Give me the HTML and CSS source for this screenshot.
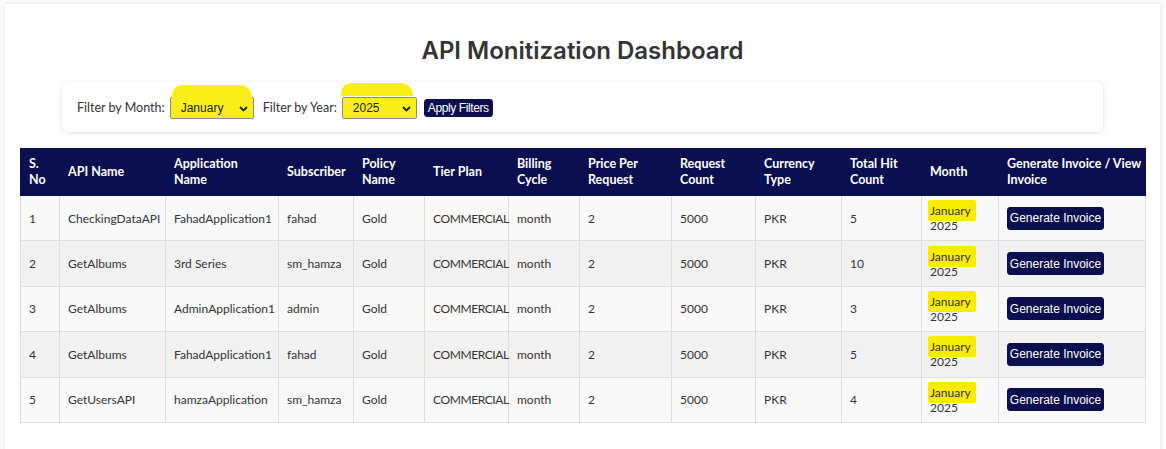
FILE: index.html
```html
<!DOCTYPE html>
<html lang="en">
<head>
<meta charset="utf-8">
<title>API Monitization Dashboard</title>
<link rel="stylesheet" href="styles.css">
</head>
<body>
<div class="card">
  <h1 class="title">API Monitization Dashboard</h1>
  <div class="filters">
    <label class="flabel" for="m">Filter by Month:</label>
    <span class="sel-wrap sel-month">
      <select id="m" class="sel"><option>January</option></select>
      <svg class="chev" width="9" height="6" viewBox="0 0 9 6"><path d="M1 1l3.5 3.5L8 1" fill="none" stroke="#222" stroke-width="1.8"/></svg>
    </span>
    <label class="flabel" for="y">Filter by Year:</label>
    <span class="sel-wrap sel-year">
      <select id="y" class="sel"><option>2025</option></select>
      <svg class="chev" width="9" height="6" viewBox="0 0 9 6"><path d="M1 1l3.5 3.5L8 1" fill="none" stroke="#222" stroke-width="1.8"/></svg>
    </span>
    <button class="btn apply">Apply Filters</button>
  </div>

  <table class="grid">
    <colgroup>
      <col style="width:39px"><col style="width:106px"><col style="width:113px"><col style="width:75px">
      <col style="width:71px"><col style="width:84px"><col style="width:71px"><col style="width:92px">
      <col style="width:84px"><col style="width:86px"><col style="width:80px"><col style="width:77px">
      <col style="width:147px">
    </colgroup>
    <thead>
      <tr>
        <th>S.<br>No</th><th>API Name</th><th>Application<br>Name</th><th>Subscriber</th><th>Policy<br>Name</th>
        <th>Tier Plan</th><th>Billing<br>Cycle</th><th>Price Per<br>Request</th><th>Request<br>Count</th>
        <th>Currency<br>Type</th><th>Total Hit<br>Count</th><th>Month</th><th>Generate Invoice / View<br>Invoice</th>
      </tr>
    </thead>
    <tbody>
      <tr>
        <td>1</td><td>CheckingDataAPI</td><td>FahadApplication1</td><td>fahad</td><td>Gold</td><td class="caps">COMMERCIAL</td><td>month</td><td>2</td><td>5000</td><td>PKR</td><td>5</td>
        <td><span class="hl hl1">January</span><br>2025</td><td><button class="btn gen">Generate Invoice</button></td>
      </tr>
      <tr>
        <td>2</td><td>GetAlbums</td><td>3rd Series</td><td>sm_hamza</td><td>Gold</td><td class="caps">COMMERCIAL</td><td>month</td><td>2</td><td>5000</td><td>PKR</td><td>10</td>
        <td><span class="hl">January</span><br>2025</td><td><button class="btn gen">Generate Invoice</button></td>
      </tr>
      <tr>
        <td>3</td><td>GetAlbums</td><td>AdminApplication1</td><td>admin</td><td>Gold</td><td class="caps">COMMERCIAL</td><td>month</td><td>2</td><td>5000</td><td>PKR</td><td>3</td>
        <td><span class="hl">January</span><br>2025</td><td><button class="btn gen">Generate Invoice</button></td>
      </tr>
      <tr>
        <td>4</td><td>GetAlbums</td><td>FahadApplication1</td><td>fahad</td><td>Gold</td><td class="caps">COMMERCIAL</td><td>month</td><td>2</td><td>5000</td><td>PKR</td><td>5</td>
        <td><span class="hl">January</span><br>2025</td><td><button class="btn gen">Generate Invoice</button></td>
      </tr>
      <tr>
        <td>5</td><td>GetUsersAPI</td><td>hamzaApplication</td><td>sm_hamza</td><td>Gold</td><td class="caps">COMMERCIAL</td><td>month</td><td>2</td><td>5000</td><td>PKR</td><td>4</td>
        <td><span class="hl">January</span><br>2025</td><td><button class="btn gen">Generate Invoice</button></td>
      </tr>
    </tbody>
  </table>
</div>
</body>
</html>
```

FILE: styles.css
```css
* { box-sizing: border-box; }
html, body { margin: 0; background: #fbfbfb; }
body {
  padding: 4px 6px 0 5px;
  font-family: Lato, "Noto Sans", sans-serif;
  color: #333;
  overflow: hidden;
}
.card {
  background: #fff;
  box-shadow: 0 0 4px rgba(0,0,0,0.12);
  padding: 30px 15px 60px 15px;
}
.title {
  margin: 0 0 14px 0;
  text-align: center;
  font-family: Inter, "Noto Sans", sans-serif;
  font-size: 24px;
  line-height: 34px;
  font-weight: 600;
  color: #333;
}
.filters {
  margin: 0 42px 16px 42px;
  height: 50px;
  display: flex;
  align-items: center;
  padding: 0 15px;
  background: #fff;
  border-radius: 6px;
  box-shadow: 0 1px 5px rgba(0,0,0,0.13);
}
.flabel {
  font-size: 12.5px;
  color: #333;
  margin-right: 5px;
}
.sel-wrap {
  position: relative;
  display: inline-block;
  margin-right: 9px;
}
.sel {
  appearance: none;
  -webkit-appearance: none;
  height: 22px;
  border: 1px solid #8a8a8a;
  border-radius: 2px;
  background: #f9ee1a;
  font-family: "Liberation Sans", Arial, sans-serif;
  font-size: 12px;
  color: #222;
  padding: 0 0 0 10px;
  margin-top: 2px;
}
.sel-month .sel { width: 84px; }
.sel-year .sel { width: 75px; }
.sel-wrap::before {
  content: "";
  position: absolute;
  left: -1px;
  top: -10px;
  height: 13px;
  background: #f9ee1a;
  border-radius: 10px 12px 0 0;
}
.sel-month::before { width: 80px; left: 2px; }
.sel-year::before { width: 72px; top: -12px; }
.chev {
  position: absolute;
  right: 6px;
  top: 11px;
  pointer-events: none;
}
.btn {
  background: #0b0f4f;
  color: #fff;
  border: 1px solid #0b0f4f;
  border-radius: 3px;
  font-family: "Liberation Sans", Arial, sans-serif;
  font-size: 12px;
  cursor: pointer;
}
.apply {
  height: 18px;
  padding: 0 3px;
  margin-left: -2px;
  margin-top: 2px;
  line-height: 16px;
  font-size: 12px;
  letter-spacing: -0.4px;
}
.grid {
  width: 1125px;
  table-layout: fixed;
  border-collapse: collapse;
  font-size: 12px;
}
.grid th {
  background: #0b0f4f;
  color: #fff;
  text-align: left;
  font-weight: 700;
  line-height: 16px;
  padding: 7px 8px;
  border: 1px solid #0b0f4f;
  font-size: 12.5px;
  white-space: nowrap;
}
.grid td {
  border: 1px solid #dedede;
  padding: 7px 8px;
  line-height: 15px;
  height: 45.4px;
  color: #333;
  vertical-align: middle;
  white-space: nowrap;
}
.grid td.caps { letter-spacing: -0.4px; }
.grid tbody tr:nth-child(odd) td { background: #f9f9f9; }
.grid tbody tr:nth-child(even) td { background: #f1f1f1; }
.hl {
  background: #f7ec00;
  padding: 3px 5px 3px 2px;
  margin-left: -2px;
  border-radius: 2px;
}
.gen {
  height: 23px;
  width: 97px;
  padding: 0;
}
```
